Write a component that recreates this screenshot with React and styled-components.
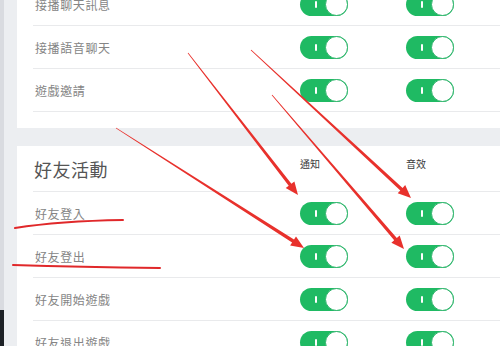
import React from 'react';
import styled, { createGlobalStyle } from 'styled-components';

const GlobalStyle = createGlobalStyle`
  html, body {
    margin: 0;
    padding: 0;
    overflow: hidden;
    background: #eceef1;
    font-family: "Noto Sans CJK TC", "Noto Sans", sans-serif;
  }
`;

const Page = styled.div`
  position: relative;
  display: flex;
  width: 500px;
  height: 346px;
  overflow: hidden;
`;

const Sidebar = styled.div`
  display: flex;
  flex-direction: column;
  width: 4px;
  flex-shrink: 0;
`;

const SideTop = styled.div`
  flex: 1;
  background: #d9dbe0;
`;

const SideBottom = styled.div`
  height: 36px;
  background: #1d2126;
`;

const Main = styled.div`
  display: flex;
  flex-direction: column;
  gap: 18px;
  margin-top: -17px;
  padding-left: 13px;
`;

const Card = styled.div`
  width: 560px;
  background: #fff;
  padding: 0 0 ${(p) => (p.$tail ? '16px' : '0')} 16px;
`;

const Row = styled.div`
  display: grid;
  grid-template-columns: 267px 106px 106px 1fr;
  align-items: center;
  height: ${(p) => (p.$head ? '45px' : '42px')};
  border-bottom: 1px solid #e9eaec;
`;

const Label = styled.div`
  padding-left: 2px;
  font-size: 12px;
  color: #858585;
  letter-spacing: 0.6px;
`;

const Title = styled.div`
  font-size: 18px;
  color: #555;
  letter-spacing: 0.5px;
  padding-left: 1px;
`;

const ColHead = styled.div`
  font-size: 10px;
  color: #3a3a3a;
  align-self: start;
  padding-top: 10px;
`;

const Switch = styled.span`
  position: relative;
  display: flex;
  align-items: center;
  justify-content: flex-end;
  width: 48px;
  height: 23px;
  border-radius: 12px;
  background: #1fba63;
  box-sizing: border-box;
`;

const Mark = styled.span`
  position: absolute;
  left: 15px;
  top: 8px;
  width: 2px;
  height: 7px;
  background: #fff;
  border-radius: 1px;
`;

const Knob = styled.span`
  width: 23px;
  height: 23px;
  border-radius: 50%;
  background: #fff;
  border: 1.5px solid #2fb46c;
  box-sizing: border-box;
`;

const Overlay = styled.svg`
  position: absolute;
  left: 0;
  top: 0;
  pointer-events: none;
`;

const Toggle = () => (
  <Switch>
    <Mark />
    <Knob />
  </Switch>
);

const SettingRow = ({ label }) => (
  <Row>
    <Label>{label}</Label>
    <Toggle />
    <Toggle />
    <span />
  </Row>
);

// tapered arrow: thin at the tail, head at the tip
const arrowPoints = (x1, y1, x2, y2) => {
  const dx = x2 - x1;
  const dy = y2 - y1;
  const len = Math.hypot(dx, dy);
  const ux = dx / len;
  const uy = dy / len;
  const nx = -uy;
  const ny = ux;
  const bx = x2 - ux * 13;
  const by = y2 - uy * 13;
  const pt = (x, y, w) => `${(x + nx * w).toFixed(1)},${(y + ny * w).toFixed(1)}`;
  return [
    pt(x1, y1, 0.4),
    pt(bx, by, 1.7),
    pt(bx, by, 5.5),
    `${x2},${y2}`,
    pt(bx, by, -5.5),
    pt(bx, by, -1.7),
    pt(x1, y1, -0.4),
  ].join(' ');
};

const arrows = [
  [188, 53, 298, 195],
  [251, 50, 411, 198],
  [272, 95, 404, 249],
  [116, 128, 304, 248],
];

const topRows = ['接播聊天訊息', '接播語音聊天', '遊戲邀請'];
const friendRows = ['好友登入', '好友登出', '好友開始遊戲', '好友退出遊戲'];

const App = () => (
  <>
    <GlobalStyle />
    <Page>
      <Sidebar>
        <SideTop />
        <SideBottom />
      </Sidebar>
      <Main>
        <Card $tail>
          {topRows.map((r) => (
            <SettingRow key={r} label={r} />
          ))}
        </Card>
        <Card>
          <Row $head>
            <Title>好友活動</Title>
            <ColHead>通知</ColHead>
            <ColHead>音效</ColHead>
            <span />
          </Row>
          {friendRows.map((r) => (
            <SettingRow key={r} label={r} />
          ))}
        </Card>
      </Main>
      <Overlay width="500" height="346" viewBox="0 0 500 346">
        {arrows.map((a, i) => (
          <polygon key={i} points={arrowPoints(...a)} fill="#e8312c" />
        ))}
        <path d="M15 228 Q60 221 123 220" stroke="#e0282a" strokeWidth="2" fill="none" strokeLinecap="round" />
        <path d="M13 265 Q80 267 160 268" stroke="#e0282a" strokeWidth="2" fill="none" strokeLinecap="round" />
      </Overlay>
    </Page>
  </>
);

export default App;
